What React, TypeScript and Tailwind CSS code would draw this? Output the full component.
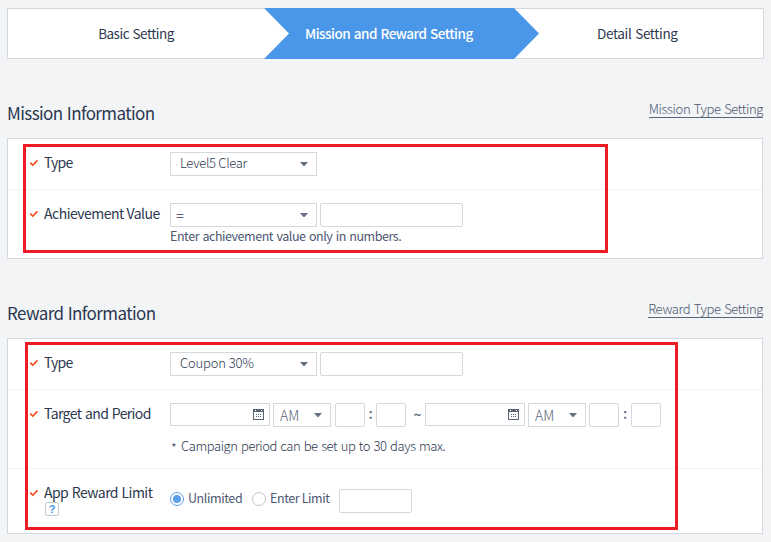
import type { ReactNode } from "react";

function Check() {
  return (
    <svg className="mt-[7px] h-[8px] w-[8px] shrink-0" viewBox="0 0 8 8" fill="none" stroke="#f0430f" strokeWidth="1.6">
      <path d="M0.2 3.6 L2.8 6.2 L7.5 1.4" />
    </svg>
  );
}

function Label({ text, track, children }: { text: string; track: string; children?: ReactNode }) {
  return (
    <div className="flex w-[140px] shrink-0 gap-[6px]">
      <Check />
      <div className="flex flex-col items-start">
        <span className={`text-[14px] leading-[20px] text-[#2c3850] ${track}`}>{text}</span>
        {children}
      </div>
    </div>
  );
}

function Select({ children, className }: { children: ReactNode; className: string }) {
  return (
    <div className={`flex h-6 shrink-0 items-center justify-between border border-[#d5d8dd] bg-white ${className}`}>
      <span className="flex items-center whitespace-pre">{children}</span>
      <svg className="h-[4px] w-[8px]" viewBox="0 0 8 4" fill="#667180">
        <path d="M0 0H8L4.5 4H3.5Z" />
      </svg>
    </div>
  );
}

function Input({ className }: { className: string }) {
  return <div className={`h-6 shrink-0 rounded-[2px] border border-[#d5d8dd] bg-white ${className}`} />;
}

function DateInput() {
  return (
    <div className="flex h-[23px] w-[100px] shrink-0 items-center justify-end border border-[#d5d8dd] bg-white pr-[5px]">
      <svg width="11" height="11" viewBox="0 0 11 11" fill="#596577" shapeRendering="crispEdges">
        <path fillRule="evenodd" d="M0 0H11V11H0ZM1 3V10H10V3ZM2 1V2H3V1ZM8 1V2H9V1Z" />
        <path d="M3 5h1v1H3zM5 5h1v1H5zM7 5h1v1H7zM3 7h1v1H3zM5 7h1v1H5zM7 7h1v1H7z" />
      </svg>
    </div>
  );
}

function Meridiem() {
  return (
    <Select className="ml-[3px] w-[58px] pl-[6px] pr-[8px]">
      <span className="text-[14px] font-light text-[#59657a]">AM</span>
    </Select>
  );
}

function Colon() {
  return <span className="flex h-5 shrink-0 items-center text-[14px] font-medium text-[#59657a]">:</span>;
}

function Heading({ title, link }: { title: string; link: string }) {
  return (
    <div className="flex items-start justify-between">
      <h2 className="mt-[-1px] text-[17px] leading-[26px] tracking-[-0.6px] text-[#2c3850] [word-spacing:1px]">{title}</h2>
      <a className="h-[17px] border-b border-[#59657a] text-[13px] font-light leading-[16px] tracking-[-0.36px] text-[#4b5870] [word-spacing:1px]">{link}</a>
    </div>
  );
}

export default function App() {
  return (
    <div className="relative h-[542px] w-[771px] overflow-hidden whitespace-nowrap bg-[#f2f4f6] pl-[7px] pr-[8px] pt-[8px] font-['Noto_Sans_CJK_KR','Noto_Sans',sans-serif]">
      <nav className="mr-[-1px] flex h-[51px] border border-[#d5d8dc] bg-white text-[13.5px] text-[#2c3850] [word-spacing:1px]">
        <div className="flex w-[256px] items-center justify-center">
          <span className="tracking-[-0.5px]">Basic Setting</span>
        </div>
        <div className="my-[-1px] flex w-[275px] items-center bg-[#4a96e8] pl-[41px] font-medium text-white [clip-path:polygon(0_0,250px_0,275px_50%,250px_100%,0_100%,25px_50%)]">
          <span className="tracking-[-0.5px]">Mission and Reward Setting</span>
        </div>
        <div className="flex items-center pl-[58px]">
          <span className="tracking-[-0.34px]">Detail Setting</span>
        </div>
      </nav>

      <div className="mt-[42px] h-[37px]">
        <Heading title="Mission Information" link="Mission Type Setting" />
      </div>
      <section className="h-[121px] border border-[#d5d8dc] bg-white">
        <div className="flex h-[51px] border-b border-[#f1f3f5] pl-[22px] pt-[13px]">
          <Label text="Type" track="tracking-[-0.8px]" />
          <Select className="w-[147px] pl-[5px] pr-[8px]">
            <span className="mr-[3px] h-px w-px bg-[#e8bf98]" />
            <span className="-mt-[2px] text-[13px] font-light tracking-[-0.3px] text-[#2c3850]">Level5 Clear</span>
          </Select>
        </div>
        <div className="flex pl-[22px] pt-[13px]">
          <Label text="Achievement Value" track="tracking-[-0.5px]" />
          <div>
            <div className="flex gap-[3px]">
              <Select className="w-[147px] pl-[5px] pr-[8px]">
                <span className="text-[14px] text-[#59657a]">=</span>
              </Select>
              <Input className="w-[143px]" />
            </div>
            <p className="text-[12.5px] leading-[18px] tracking-[-0.45px] text-[#4b5870] [word-spacing:1px]">Enter achievement value only in numbers.</p>
          </div>
        </div>
      </section>

      <div className="mt-[40px] h-[39px] pt-[2px]">
        <Heading title="Reward Information" link="Reward Type Setting" />
      </div>
      <section className="h-[196px] border border-[#d5d8dc] bg-white">
        <div className="flex h-[51px] border-b border-[#f1f3f5] pl-[22px] pt-[13px]">
          <Label text="Type" track="tracking-[-0.8px]" />
          <Select className="w-[147px] pl-[9px] pr-[8px]">
            <span className="-mt-[2px] text-[13px] font-light tracking-[-0.15px] text-[#2c3850]">Coupon 30%</span>
          </Select>
          <Input className="ml-[3px] w-[143px]" />
        </div>
        <div className="flex h-[79px] border-b border-[#f1f3f5] pl-[22px] pt-[13px]">
          <Label text="Target and Period" track="tracking-[-0.6px] [word-spacing:1px]" />
          <div>
            <div className="flex">
              <DateInput />
              <Meridiem />
              <Input className="ml-[4px] w-[30px]" />
              <div className="flex w-[11px] justify-center"><Colon /></div>
              <Input className="w-[30px]" />
              <span className="flex h-[22px] w-[19px] items-center justify-center pl-[4px] text-[14px] font-medium text-[#59657a]">~</span>
              <DateInput />
              <Meridiem />
              <Input className="ml-[3px] w-[30px]" />
              <div className="flex w-[12px] justify-center"><Colon /></div>
              <Input className="w-[30px]" />
            </div>
            <p className="mt-[9px] flex text-[13px] font-light leading-[20px] tracking-[-0.42px] text-[#2c3850] [word-spacing:1px]">
              <span className="w-[11px] pl-px pt-[3px] leading-[17px]">*</span>
              <span>Campaign period can be set up to 30 days max.</span>
            </p>
          </div>
        </div>
        <div className="flex pl-[22px] pt-[13px]">
          <Label text="App Reward Limit" track="tracking-[-0.55px] [word-spacing:1px]">
            <span className="ml-px flex size-[14px] items-center justify-center rounded-[2px] border border-[#c3c9d2] bg-white font-['Liberation_Sans',sans-serif] text-[11px] font-bold leading-[12px] text-[#4a96e8]">?</span>
          </Label>
          <div className="flex items-start pt-[7px] text-[12.5px] leading-[18px] tracking-[-0.4px] text-[#4b5870]">
            <span className="mt-[3px] flex size-[14px] items-center justify-center rounded-full border border-[#5b9fe9]">
              <span className="size-[8px] rounded-full bg-[#5b9fe9]" />
            </span>
            <span className="w-[68px] pl-[4px]">Unlimited</span>
            <span className="mt-[3px] size-[14px] rounded-full border border-[#c4c4c4]" />
            <span className="w-[73px] pl-[4px]">Enter Limit</span>
            <Input className="w-[73px]" />
          </div>
        </div>
      </section>

      <div className="pointer-events-none absolute left-[23px] top-[144px] h-[109px] w-[585px] border-[3px] border-[#ed1c24]" />
      <div className="pointer-events-none absolute left-[25px] top-[342px] h-[188px] w-[653px] border-[3px] border-[#ed1c24]" />
    </div>
  );
}
